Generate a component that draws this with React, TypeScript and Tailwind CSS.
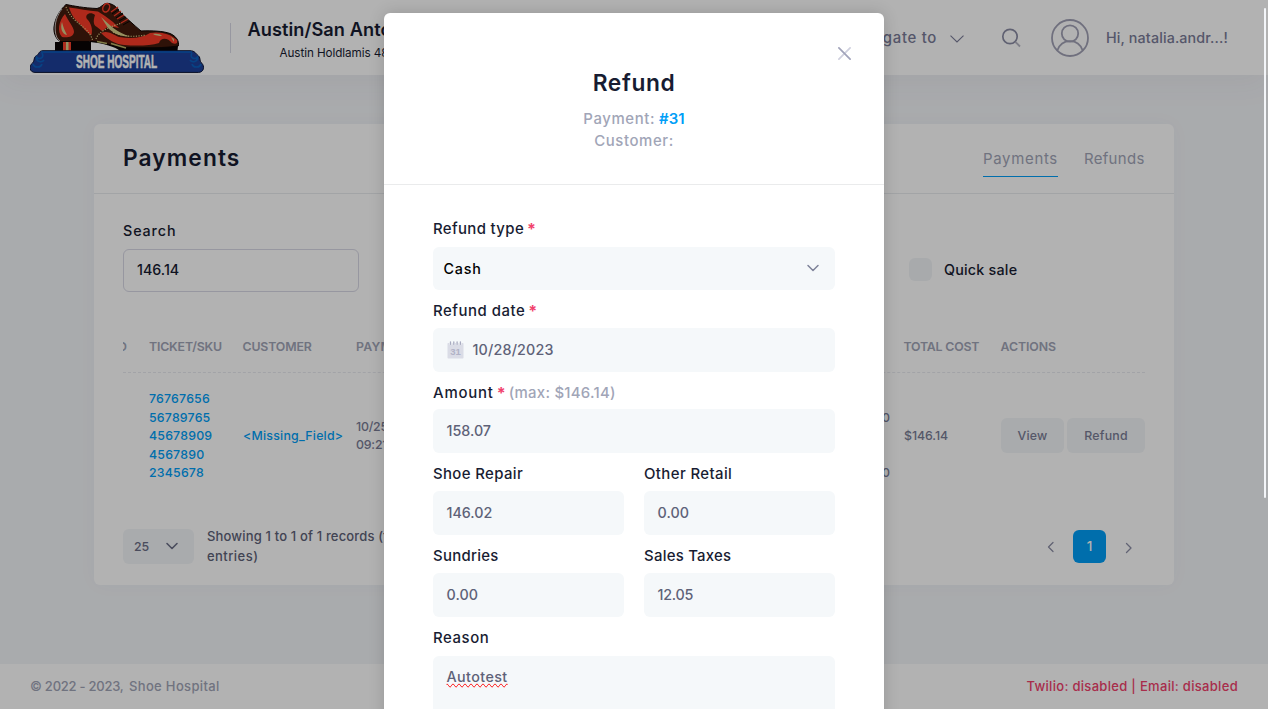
import type { ReactNode } from 'react'

function Chevron({ className, points, width }: { className: string; points: string; width: number }) {
  return (
    <svg className={className} viewBox="0 0 14 14" fill="none" stroke="currentColor" strokeWidth={width} strokeLinecap="round" strokeLinejoin="round">
      <polyline points={points} />
    </svg>
  )
}

function Logo() {
  return (
    <svg className="h-[75px] w-[175px] shrink-0" viewBox="30 0 175 75">
      {/* heel and sole */}
      <path d="M55 42H91V51H55Z" fill="#0a0505" />
      <path d="M63 42H71V51H63Z" fill="#f5402c" />
      <path d="M66 42H68.5V51H66Z" fill="#d6cf8c" />
      <path d="M90 40L118 45L178 46L177.5 51H120C116 47 103 43 90 42Z" fill="#0a0505" />
      {/* upper */}
      <path d="M66 4.500C74 6 84 8 97 8.500C101 8 103 3.500 107 3.300C112 3.500 116 6 119 11C125 17 134 25 141 31C152 30.500 163 31 170 33.500C176 36 179.500 41 178.300 46C168 47.500 156 48 144 47.700C128 48 118 47.500 107 44C98 41.500 93 41.500 88 41.500H60C55 38 53.500 32 54 27C55 18 60 10 66 4.500Z" fill="#421a0c" stroke="#0d0503" strokeWidth="1" />
      <path d="M62 9C57 15 54.500 23 55.300 31C55.800 36 57 39 60 41" fill="none" stroke="#e8e8e8" strokeWidth="0.800" />
      {/* red leather panels */}
      <path d="M65 14C68 21 74 27 74 32C73.500 37 67 38 62 37C57 32 58.500 21 65 14Z" fill="#fa3c28" />
      <path d="M69 7.500C79 8.500 88 11 98 11.500L105 16L113 22L119 28L109 26L102 31L97 27C92 25 94 18 95 15C91 11 84 14 87 19C91 23 93 29 91.500 35C86 33 83 27 78 22C73 18 71 13 69 7.500Z" fill="#fa3c28" />
      <path d="M101 33C108 30 112 34 119 37C132 39 142 38 150 33C160 31 171 34 177 40C178 43 176 45 172 43C168 38 161 37 159 43C150 46 135 46 124 45C115 44 108 40 101 33Z" fill="#fa3c28" />
      {/* highlights */}
      <path d="M101 17C111 26 116 32 130 36.500C120 37 113 33 108 28Z" fill="#d6cf8c" />
      <path d="M62 22C60 28 62 34 67 35C65 31 63 27 62 22Z" fill="#d6cf8c" />
      <path d="M153 34C156 33.500 161 34 162 36C159 36 155 35.500 153 34ZM171 37L174 39V42Z" fill="#d6cf8c" />
      <path d="M97 41.500L107 43.500M111 43.500L126 48" stroke="#b8b468" strokeWidth="1.600" fill="none" />
      {/* stitching */}
      <g fill="none" stroke="#e2d88c" strokeWidth="1.100" strokeDasharray="1.2 1.4">
        <path d="M66 7C69 16 77 22 83 27C88 31 91 35 92.500 40" />
        <path d="M96 39C98 33 105 28 122 23" />
        <path d="M113 32C123 37 135 37 146 35" />
      </g>
      {/* laces */}
      <ellipse cx="106.200" cy="7.800" rx="3.200" ry="4.400" transform="rotate(25 106.200 7.800)" fill="#421a0c" stroke="#fa3c28" strokeWidth="1.500" />
      <path d="M111 12L118 7M114 16L121 11M117 19L124 15M121 23L128 19" stroke="#fa3c28" strokeWidth="1.300" />
      <path d="M112 14L119 9M116 18L123 13M119 21L126 17M123 25L130 21" stroke="#0d0503" strokeWidth="1" />
      {/* plinth */}
      <path d="M43 50.700H190C195 50.700 196 54 198 55.500C201 57 199 61 201.500 63C205 66 204 72.400 198.500 72.400H35C29.500 72.400 28.500 66 32.500 63C35 61 33 57 37 55.500C39 54 39 50.700 43 50.700Z" fill="#1e409a" stroke="#0b1433" strokeWidth="1" />
      <path d="M41 52H192" stroke="#0b5fbe" strokeWidth="1.300" />
      <g fill="none" stroke="#0b5fbe" strokeWidth="1.600">
        <path d="M42 53C45 58 39 60 36.500 57C36 62 42 63 44 60M33 64C34 68 41 68 42 64" />
        <path d="M192 53C189 58 195 60 197.500 57C198 62 192 63 190 60M201 64C200 68 193 68 192 64" />
      </g>
      <g transform="translate(76 68.300) scale(0.552 1)">
        <text x="0" y="0" fontFamily="Liberation Sans, sans-serif" fontWeight="700" fontSize="18.200" fill="#ffffff" stroke="#ffffff" strokeWidth="0.500">SHOE HOSPITAL</text>
      </g>
    </svg>
  )
}

function Label({ className, required, children }: { className: string; required?: boolean; children: ReactNode }) {
  return (
    <div className={`flex h-5 items-center text-[14.95px] font-medium whitespace-pre text-[#181c32] ${className}`}>
      {children}
      {required && <span className="pl-[3px] text-[16px] font-bold tracking-normal text-[#f1416c]">*</span>}
    </div>
  )
}

function Field({ className, children }: { className: string; children: ReactNode }) {
  return (
    <div className={`flex h-11 items-center rounded-md bg-[#f5f8fa] px-[13.5px] text-[14.3px] font-medium text-[#5e6278] ${className}`}>
      {children}
    </div>
  )
}

function RefundDialog() {
  return (
    <div className="absolute top-[13px] left-[384px] h-[760px] w-[500px] rounded-md bg-white shadow-[0_0_16px_rgba(0,0,0,0.16)]">
      <div className="relative flex h-[172px] flex-col items-center border-b border-[#eaebec] pt-[55px]">
        <svg className="absolute top-[34px] left-[454px] size-[13px]" viewBox="0 0 13 13" fill="none" strokeWidth="1.700" strokeLinecap="round">
          <path d="M0.900 12.100L12.100 0.900" stroke="#cfd0de" />
          <path d="M0.900 0.900L12.100 12.100" stroke="#a1a3ba" />
        </svg>
        <h2 className="h-[30px] text-[22.75px] leading-[30px] font-semibold tracking-[0.62px] text-[#181c32]">Refund</h2>
        <div className="mt-[10px] flex h-[22px] items-center gap-1 text-[14.95px] font-medium text-[#a1a5b7]">
          <span className="tracking-[0.6px]">Payment:</span>
          <span className="font-semibold tracking-[0.05px] text-[#009ef7]">#31</span>
        </div>
        <div className="flex h-[22px] items-center text-[14.95px] font-medium tracking-[0.59px] text-[#a1a5b7]">Customer:</div>
      </div>
      <div className="flex flex-col px-[49px] pt-[34px]">
        <Label className="tracking-[0.36px]" required>Refund type</Label>
        <div className="mt-2 flex h-[43px] items-center justify-between rounded-md bg-[#f5f8fa] pr-[15px] pl-[10.5px] text-[14.3px] font-medium tracking-[0.85px] text-black">
          <span>Cash</span>
          <Chevron className="size-[14px] -translate-y-px text-[#7e8299]" points="2,4.500 7,9.500 12,4.500" width={1.5} />
        </div>
        <Label className="mt-[11px] tracking-[0.52px]" required>Refund date</Label>
        <Field className="mt-[7px] gap-[9px] tracking-[0.18px]">
          <svg className="h-[18px] w-[17px]" viewBox="0 0 17 18">
            <rect x="0.500" y="2" width="16" height="15.500" rx="0.800" fill="#dadce6" />
            <path d="M3.500 0.500V3.500M6.800 0.500V3.500M10.100 0.500V3.500M13.400 0.500V3.500" stroke="#f5f8fa" strokeWidth="2.400" />
            <path d="M3.500 0.800V3.300M6.800 0.800V3.300M10.100 0.800V3.300M13.400 0.800V3.300" stroke="#a8abc0" strokeWidth="1.300" strokeLinecap="round" />
            <text x="8.500" y="14" textAnchor="middle" fontFamily="Liberation Sans, sans-serif" fontSize="9.500" fontWeight="700" letterSpacing="0" fill="#b1b3c7">31</text>
          </svg>
          10/28/2023
        </Field>
        <div className="mt-[11px] flex items-center gap-[3px]">
          <Label className="tracking-[0.8px]" required>Amount</Label>
          <span className="text-[14.95px] leading-5 font-medium tracking-[0.26px] text-[#a1a5b7]">(max: $146.14)</span>
        </div>
        <Field className="mt-[6px]">158.07</Field>
        <div className="mt-[11px] grid grid-cols-2 gap-x-5">
          <Label className="tracking-[0.36px]">Shoe Repair</Label>
          <Label className="tracking-[0.4px]">Other Retail</Label>
          <Field className="mt-[7px]">146.02</Field>
          <Field className="mt-[7px] tracking-[0.08px]">0.00</Field>
          <Label className="mt-[11px] tracking-[0.28px]">Sundries</Label>
          <Label className="mt-[11px] tracking-[0.25px]">Sales Taxes</Label>
          <Field className="mt-[7px] tracking-[0.08px]">0.00</Field>
          <Field className="mt-[7px] tracking-[-0.23px]">12.05</Field>
        </div>
        <Label className="mt-[11px] tracking-[0.58px]">Reason</Label>
        <div className="mt-2 h-[90px] rounded-md bg-[#f5f8fa] px-[13.5px] pt-[10px] text-[14.3px] leading-[21px] font-medium text-[#5e6278]">
          <span className="tracking-[0.42px] [text-decoration-line:spelling-error]">Autotest</span>
        </div>
      </div>
    </div>
  )
}

function Header() {
  return (
    <header className="relative z-10 flex h-[75px] items-center justify-between bg-white pr-10 pl-[30px] shadow-[0_10px_30px_rgba(82,63,105,0.05)]">
      <div className="flex items-center">
        <Logo />
        <div className="ml-[25px] h-[30px] w-px bg-[#d8d8e5]" />
        <div className="ml-[16.5px] flex flex-col pt-[4px] text-[#181c32]">
          <span className="text-[18.2px] leading-[26px] font-semibold tracking-[0.06px]">Austin/San Anto</span>
          <span className="pl-8 text-[11.7px] leading-[22px] tracking-[-0.08px]">Austin Holdlamis 48</span>
        </div>
      </div>
      <div className="flex items-center text-[#7a7c98]">
        <span className="pt-px text-[14.95px] font-medium tracking-[0.68px]">Navigate to</span>
        <svg className="ml-[13px] h-[8px] w-[14px] translate-y-px" viewBox="0 0 14 8" fill="none" stroke="currentColor" strokeWidth="1.100">
          <path d="M0.500 0.700L7 7L13.500 0.700" />
        </svg>
        <svg className="ml-[37px] size-[20px]" viewBox="0 0 20 20" fill="none">
          <circle cx="9" cy="8.500" r="7.200" stroke="#8a8ca4" strokeWidth="1.700" />
          <path d="M14.300 13.800L19 18.500" stroke="#b5b5c3" strokeWidth="1.900" />
        </svg>
        <svg className="ml-[30px] size-[38px]" viewBox="0 0 38 38" fill="none" stroke="#a1a1b5" strokeWidth="1.800">
          <circle cx="19" cy="19" r="18" />
          <circle cx="19" cy="14.500" r="8.200" />
          <path d="M6.300 31.500C8.500 25.500 13.500 22.200 19 22.200S29.500 25.500 31.700 31.500" />
        </svg>
        <span className="ml-[17px] w-[122px] pt-px text-[14.3px] font-medium whitespace-nowrap tracking-[0.14px]">Hi, natalia.andr...!</span>
      </div>
    </header>
  )
}

function PaymentsCard() {
  return (
    <section className="mx-[94px] mt-[49px] flex h-[461px] flex-col rounded-md bg-white shadow-[0_0_20px_rgba(76,87,125,0.03)]">
      <div className="flex h-[70px] items-center justify-between border-b border-[#e9ebee] px-[29px]">
        <h1 className="text-[22.75px] font-semibold tracking-[1.08px] text-[#181c32]">Payments</h1>
        <div className="flex h-9 items-stretch gap-[26px] text-[14.95px] leading-[37px] text-[#a1a5b7]">
          <span className="w-[75px] border-b border-[#009ef7] tracking-[0.7px]">Payments</span>
          <span className="w-[61px] tracking-[0.33px]">Refunds</span>
        </div>
      </div>
      <div className="flex flex-col px-[29px] pt-[27px]">
        <div className="flex h-[71px] items-end">
          <div className="w-[236px] self-start">
            <div className="h-5 text-[14.3px] leading-5 font-medium tracking-[0.9px] text-[#181c32]">Search</div>
            <div className="mt-2 flex h-[43px] items-center rounded-md border border-[#d8d8e5] px-[13px] pb-px text-[14.3px] font-medium text-[#181c32]">146.14</div>
          </div>
          <div className="mb-[11px] ml-[550px] flex items-center">
            <div className="size-[23px] rounded-md bg-[#f1f4f7]" />
            <span className="ml-3 text-[14.3px] font-medium tracking-[0.22px] text-[#181c32]">Quick sale</span>
          </div>
        </div>
        <div className="mt-[28px] grid h-[53px] grid-cols-[26px_93.500px_113.500px_1fr_97px_144.500px] items-center border-b border-dashed border-[#e8eaf0] pt-[2px] text-[12.35px] font-semibold text-[#a1a5b7]">
          <span className="flex w-1 justify-end overflow-hidden">D</span>
          <span className="tracking-[-0.18px]">TICKET/SKU</span>
          <span className="tracking-[-0.16px]">CUSTOMER</span>
          <span className="tracking-[0.2px]">PAYMENT</span>
          <span className="tracking-[-0.2px]">TOTAL COST</span>
          <span className="tracking-[-0.1px]">ACTIONS</span>
        </div>
        <div className="grid h-[126px] grid-cols-[26px_94px_113px_1fr_97px_144px] items-center text-[12.35px] leading-[18.5px] font-medium text-[#7a7d96]">
          <span />
          <div className="flex flex-col pt-px tracking-[0.2px] text-[#009ef7]">
            <span>76767656</span>
            <span>56789765</span>
            <span>45678909</span>
            <span>4567890</span>
            <span>2345678</span>
          </div>
          <span className="tracking-[0.23px] text-[#009ef7]">&lt;Missing_Field&gt;</span>
          <div className="flex items-center justify-between pr-[14px]">
            <div className="flex flex-col tracking-[-0.2px]">
              <span>10/25</span>
              <span>09:21</span>
            </div>
            <div className="flex flex-col gap-[36.5px] pt-[19px]">
              <span>0</span>
              <span>0</span>
            </div>
          </div>
          <span className="tracking-[-0.05px]">$146.14</span>
          <div className="-mt-px flex gap-[3px]">
            <button className="h-[35px] w-[63px] rounded-md bg-[#f2f5f8] pt-px tracking-[0.2px]">View</button>
            <button className="h-[35px] w-[78px] rounded-md bg-[#f2f5f8] pt-px tracking-[0.2px]">Refund</button>
          </div>
        </div>
        <div className="mt-[27px] flex h-[41px] items-center justify-between">
          <div className="flex items-center">
            <div className="flex h-[35px] w-[71px] items-center justify-between rounded-md bg-[#f2f5f8] pr-[15px] pl-[11px] text-[12.35px] font-medium text-[#6b6e86]">
              <span className="pt-px">25</span>
              <Chevron className="size-[14px] -translate-y-px" points="2,4.500 7,9.500 12,4.500" width={1.6} />
            </div>
            <div className="-mt-px ml-[13px] text-[13px] leading-[20px] font-medium text-[#5e6278]">
              <div className="tracking-[0.16px]">Showing 1 to 1 of 1 records (filtered</div>
              <div className="tracking-[0.45px]">entries)</div>
            </div>
          </div>
          <div className="mr-[10px] flex items-center text-[#8c8ea6]">
            <Chevron className="size-[14px]" points="9,2.500 4.500,7 9,11.500" width={1.3} />
            <div className="mx-[15px] flex size-[33px] items-center justify-center rounded-md bg-[#009ef7] text-[13.5px] font-medium text-white">1</div>
            <Chevron className="size-[14px] translate-y-px" points="5.500,2.500 10,7 5.500,11.500" width={1.3} />
          </div>
        </div>
      </div>
    </section>
  )
}

export default function App() {
  return (
    <div className="relative h-[709px] w-full overflow-hidden bg-[#f3f5f8] font-['Inter',sans-serif]">
      <div className="flex h-full flex-col">
        <Header />
        <PaymentsCard />
        <footer className="mt-auto flex h-[45px] items-center justify-between bg-white px-[30px] text-[13px] font-medium text-[#a1a5b7]">
          <div className="flex gap-[6px]">
            <span className="w-[93px] whitespace-nowrap tracking-[-0.24px]">© 2022 - 2023,</span>
            <span className="tracking-[0.34px]">Shoe Hospital</span>
          </div>
          <span className="tracking-[0.31px] text-[#f1416c]">Twilio: disabled | Email: disabled</span>
        </footer>
      </div>
      <div className="absolute inset-0 z-20 bg-black/30">
        <RefundDialog />
        <div className="absolute top-2 right-[2px] h-[490px] w-[2px] rounded-full bg-[#f3f5f8]" />
      </div>
    </div>
  )
}
